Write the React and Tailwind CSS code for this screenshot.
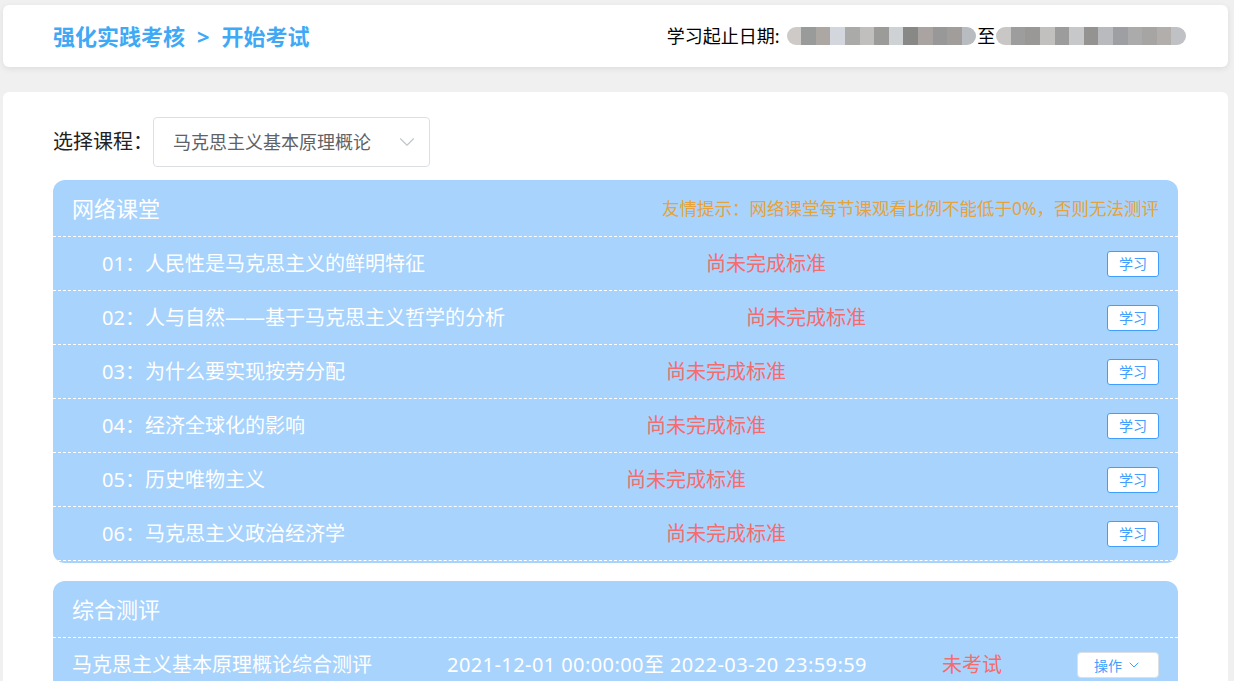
import React from 'react'
import { ChevronDown } from 'lucide-react'

const lessons = [
  '01：人民性是马克思主义的鲜明特征',
  '02：人与自然——基于马克思主义哲学的分析',
  '03：为什么要实现按劳分配',
  '04：经济全球化的影响',
  '05：历史唯物主义',
  '06：马克思主义政治经济学'
]

const blurA = ['#cdcac7', '#999b9a', '#aca7a3', '#d3d6dc', '#aaaaa8', '#c0bfbd', '#9b9b9a', '#cfd2d4', '#888886', '#a9a4a1', '#989898', '#a19d9b', '#b8bbbf']
const blurB = ['#c9c7c6', '#9d9d9d', '#999897', '#c2c0be', '#9c9c9c', '#c7c8ca', '#959391', '#b9babd', '#9e9fa2', '#ababab', '#a7a5a3', '#b1aeab', '#c0c1c5']

const Blur = ({ colors }) => (
  <span className="inline-flex h-[18px] overflow-hidden rounded-full">
    {colors.map((c, i) => (
      <span key={i} className="h-full w-[14.6px]" style={{ backgroundColor: c }} />
    ))}
  </span>
)

const StudyBtn = () => (
  <button className="h-[26px] w-[52px] rounded-[3px] border border-[#409eff] bg-white text-[14px] text-[#409eff]">学习</button>
)

const App = () => {
  return (
    <div className="min-h-screen bg-[#f0f0f0] pt-[5px] pl-[3px] pr-[6px] font-['Noto_Sans','Noto_Sans_CJK_SC',sans-serif]">
      <div className="flex h-[62px] items-center justify-between rounded-[6px] bg-white pl-[50px] pr-[42px] shadow-[0_2px_6px_rgba(0,0,0,0.08)]">
        <div className="flex items-center text-[22px] font-bold text-[#3fa9f5]">
          <span>强化实践考核</span>
          <span className="mx-[12px]">&gt;</span>
          <span>开始考试</span>
        </div>
        <div className="flex items-center text-[18px] text-black">
          <span>学习起止日期:</span>
          <span className="ml-[7px] flex items-center">
            <Blur colors={blurA} />
          </span>
          <span className="mx-[1px]">至</span>
          <span className="flex items-center">
            <Blur colors={blurB} />
          </span>
        </div>
      </div>

      <div className="mt-[25px] rounded-[6px] bg-white px-[50px] pt-[25px] pb-[40px]">
        <div className="flex items-center">
          <span className="text-[20px] text-[#222]">选择课程：</span>
          <div className="flex h-[50px] w-[277px] items-center justify-between rounded-[4px] border border-[#dcdfe6] pl-[19px] pr-[9px]">
            <span className="text-[18px] text-[#606266]">马克思主义基本原理概论</span>
            <ChevronDown size={26} strokeWidth={1} className="text-[#c0c4cc]" />
          </div>
        </div>

        <div className="mt-[13px] overflow-hidden rounded-[12px] bg-[#a8d3fd]">
          <div className="flex h-[57px] items-center justify-between border-b border-dashed border-white px-[19px]">
            <span className="text-[22px] text-white">网络课堂</span>
            <span className="text-[17.5px] text-[#e6a23c]">友情提示：网络课堂每节课观看比例不能低于0%，否则无法测评</span>
          </div>
          {lessons.map((t) => (
            <div key={t} className="flex h-[54px] items-center justify-between border-b border-dashed border-white pl-[49px] pr-[19px]">
              <span className="text-[20px] text-white">{t}</span>
              <span className="text-[20px] text-[#f56c6c]">尚未完成标准</span>
              <StudyBtn />
            </div>
          ))}
          <div className="h-[2px]" />
        </div>

        <div className="mt-[18px] overflow-hidden rounded-[12px] bg-[#a8d3fd]">
          <div className="flex h-[57px] items-center border-b border-dashed border-white px-[19px]">
            <span className="text-[22px] text-white">综合测评</span>
          </div>
          <div className="flex h-[54px] items-center justify-between px-[19px]">
            <span className="text-[20px] text-white">马克思主义基本原理概论综合测评</span>
            <span className="text-[20px] tracking-[0.42px] text-white">2021-12-01 00:00:00至 2022-03-20 23:59:59</span>
            <span className="text-[20px] text-[#f56c6c]">未考试</span>
            <button className="flex h-[26px] w-[82px] items-center justify-center gap-[4px] rounded-[4px] border border-[#dcdfe6] bg-white text-[14px] text-[#409eff]">
              操作
              <ChevronDown size={16} strokeWidth={1.5} />
            </button>
          </div>
        </div>
      </div>
    </div>
  )
}

export default App
